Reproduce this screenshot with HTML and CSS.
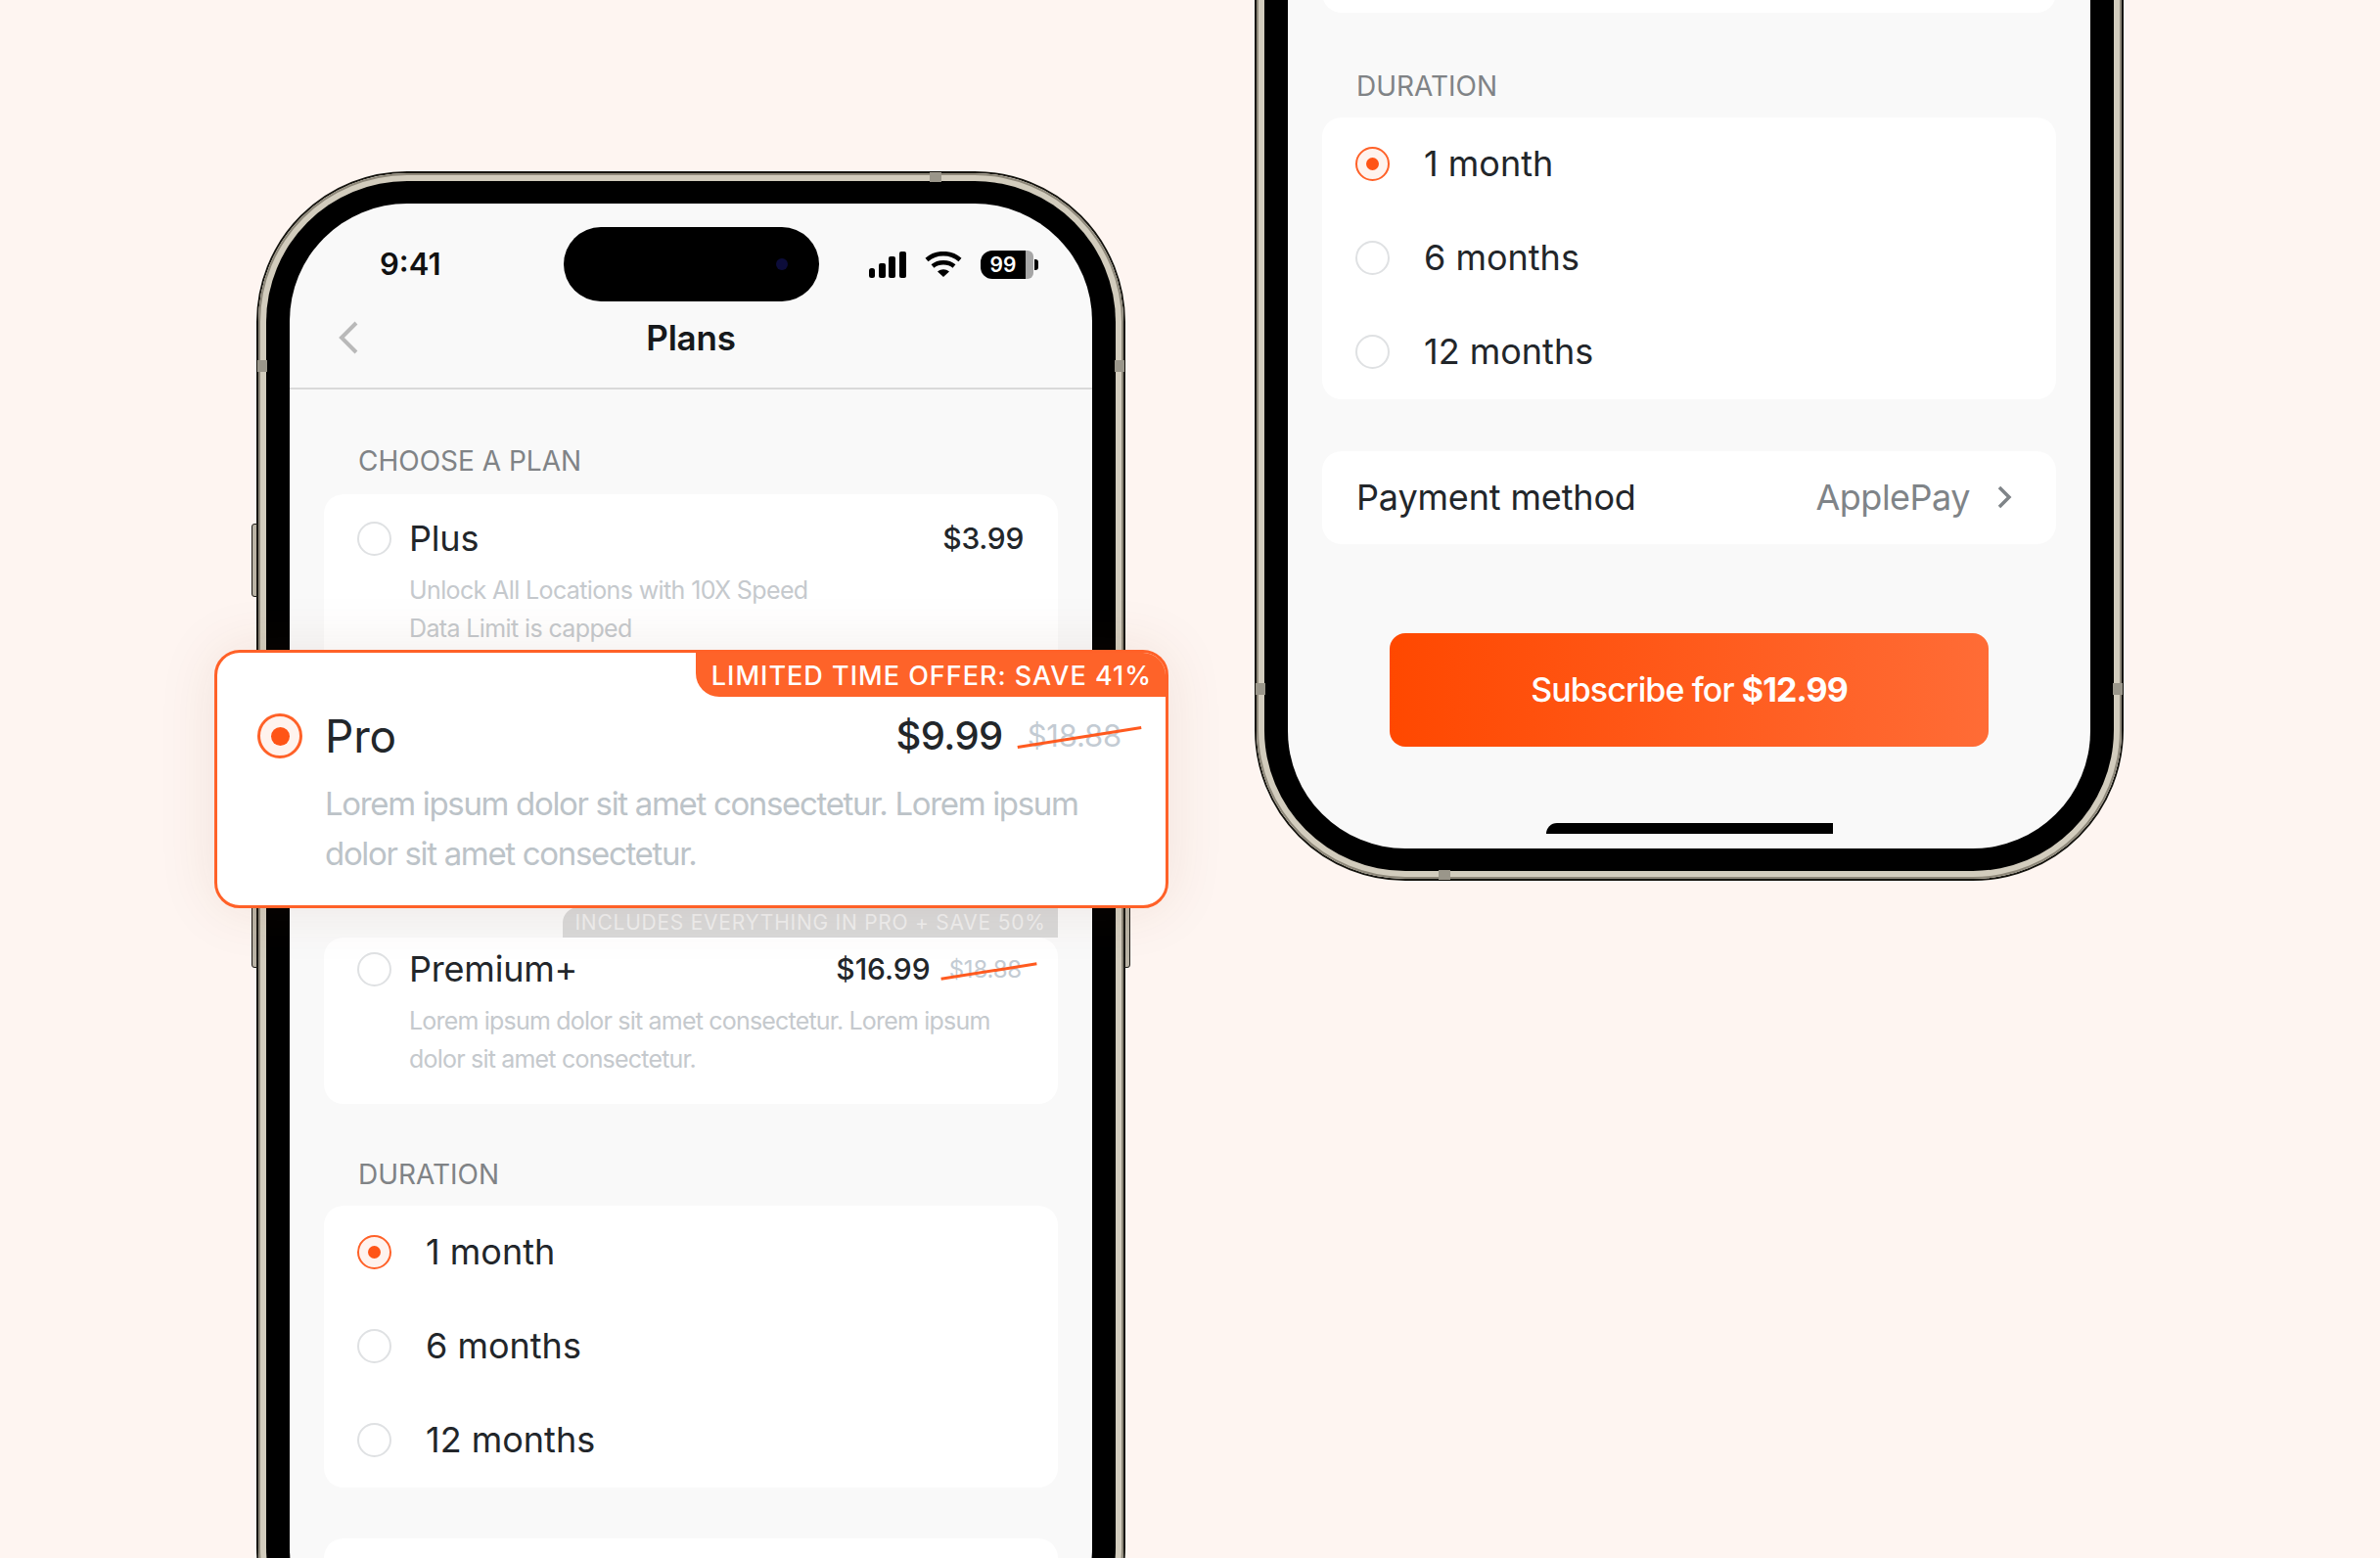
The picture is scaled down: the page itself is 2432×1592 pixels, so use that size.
FILE: index.html
```html
<!DOCTYPE html>
<html lang="en">
<head>
<meta charset="UTF-8">
<meta name="viewport" content="width=device-width, initial-scale=1.0">
<title>Plans</title>
<link rel="stylesheet" href="styles.css">
</head>
<body>

<div class="stage">

  <!-- Left phone: plan picker -->
  <div class="phone phone-left">
    <span class="side-btn side-btn-a"></span>
    <span class="side-btn side-btn-b"></span>
    <span class="side-btn side-btn-c"></span>
    <span class="band band-top"></span>
    <span class="band band-left"></span>
    <span class="band band-right"></span>
    <div class="ring">
      <div class="bezel">
        <div class="screen">
          <div class="status">
            <span class="time">9:41</span>
            <div class="island"><span class="camera"></span></div>
            <div class="status-icons">
              <svg class="signal" width="38" height="27" viewBox="0 0 38 27">
                <rect x="0" y="17" width="6" height="10" rx="2.500"/>
                <rect x="10" y="12" width="7" height="15" rx="2"/>
                <rect x="20" y="5" width="7" height="22" rx="2"/>
                <rect x="31" y="0" width="7" height="27" rx="2"/>
              </svg>
              <svg class="wifi" width="38" height="26" viewBox="0 0 38 26">
                <path d="M2 8.500C11.500 0 26.500 0 36 8.500" fill="none" stroke="#000" stroke-width="4.500"/>
                <path d="M8 15C14 10 24 10 30 15" fill="none" stroke="#000" stroke-width="4.500"/>
                <path d="M13 20.500C17 17.500 21 17.500 25 20.500L19 26Z"/>
              </svg>
              <span class="battery">99</span>
            </div>
          </div>

          <div class="nav">
            <svg class="back" width="22" height="34" viewBox="0 0 22 34">
              <path d="M19 2L4 17L19 32" fill="none" stroke="#b9b9b9" stroke-width="4"/>
            </svg>
            <h1 class="nav-title">Plans</h1>
          </div>

          <div class="content">
            <h2 class="section-label label-first">CHOOSE A PLAN</h2>

            <div class="card plan plan-plus">
              <div class="plan-row">
                <span class="radio"></span>
                <span class="plan-name">Plus</span>
                <span class="plan-price">$3.99</span>
              </div>
              <p class="plan-desc">Unlock All Locations with 10X Speed<br>Data Limit is capped</p>
            </div>

            <div class="premium">
              <div class="includes-tag">INCLUDES EVERYTHING IN PRO + SAVE 50%</div>
              <div class="card plan">
                <div class="plan-row">
                  <span class="radio"></span>
                  <span class="plan-name">Premium+</span>
                  <span class="plan-price">$16.99</span>
                  <span class="old-price">$18.88</span>
                </div>
                <p class="plan-desc">Lorem ipsum dolor sit amet consectetur. Lorem ipsum<br>dolor sit amet consectetur.</p>
              </div>
            </div>

            <h2 class="section-label">DURATION</h2>
            <div class="card">
              <div class="duration-row"><span class="radio on"></span><span>1 month</span></div>
              <div class="duration-row"><span class="radio"></span><span>6 months</span></div>
              <div class="duration-row"><span class="radio"></span><span>12 months</span></div>
            </div>

            <div class="card stub"></div>
          </div>
        </div>
      </div>
    </div>
  </div>

  <!-- Right phone: bottom of the same screen -->
  <div class="phone phone-right">
    <span class="band band-bottom"></span>
    <span class="band band-left"></span>
    <span class="band band-right"></span>
    <div class="ring">
      <div class="bezel">
        <div class="screen">
          <div class="content">
            <div class="card stub"></div>

            <h2 class="section-label">DURATION</h2>
            <div class="card">
              <div class="duration-row"><span class="radio on"></span><span>1 month</span></div>
              <div class="duration-row"><span class="radio"></span><span>6 months</span></div>
              <div class="duration-row"><span class="radio"></span><span>12 months</span></div>
            </div>

            <div class="card payment">
              <span class="payment-label">Payment method</span>
              <span class="payment-value">ApplePay</span>
              <svg class="chevron" width="18" height="24" viewBox="0 0 18 24">
                <path d="M4 2L14 12L4 22" fill="none" stroke="#7f8488" stroke-width="3.500"/>
              </svg>
            </div>

            <button class="subscribe">Subscribe for <strong>$12.99</strong></button>
            <div class="home-bar"></div>
          </div>
        </div>
      </div>
    </div>
  </div>

  <!-- Highlighted plan, sits over the left phone -->
  <div class="pro-card">
    <div class="offer-tag">LIMITED TIME OFFER: SAVE 41%</div>
    <div class="plan-row">
      <span class="radio on"></span>
      <span class="plan-name">Pro</span>
      <span class="plan-price">$9.99</span>
      <span class="old-price">$18.88</span>
    </div>
    <p class="plan-desc">Lorem ipsum dolor sit amet consectetur. Lorem ipsum<br>dolor sit amet consectetur.</p>
  </div>

</div>

</body>
</html>
```

FILE: styles.css
```css
* {
  box-sizing: border-box;
}

body {
  margin: 0;
  background-color: #fef5f1;
  font-family: Inter, "Liberation Sans", sans-serif;
  color: #22262a;
}

h1, h2, p {
  margin: 0;
  font-weight: normal;
}

.stage {
  position: relative;
  display: flex;
  align-items: flex-start;
  gap: 132px;
  width: 2432px;
  height: 1592px;
  padding-left: 262px;
  overflow: hidden;
}

/* Phone shell */
.phone {
  position: relative;
  flex: none;
  width: 888px;
  border: 2px solid #15140f;
  border-radius: 154px;
}

.phone-left {
  margin-top: 175px;
  height: 1560px;
}

.phone-right {
  margin-top: -220px;
  height: 1120px;
}

.ring {
  height: 100%;
  padding: 8px;
  border-radius: 152px;
  background-color: #d2ccbd;
  box-shadow: inset 0 0 0 2px #8e887a;
}

.bezel {
  height: 100%;
  padding: 23px 24px;
  border-radius: 144px;
  background-color: #000;
}

.screen {
  height: 100%;
  border-radius: 120px;
  background-color: #f9f9f9;
  overflow: hidden;
}

.side-btn {
  position: absolute;
  left: -7px;
  width: 6px;
  border: 1px solid #1d1c18;
  border-radius: 3px 0 0 3px;
  background-color: #b9b3a5;
}

.side-btn-a {
  top: 358px;
  height: 75px;
}

.side-btn-b {
  top: 700px;
  height: 112px;
}

.side-btn-c {
  left: auto;
  right: -7px;
  top: 640px;
  height: 172px;
  border-radius: 0 3px 3px 0;
}

.band {
  position: absolute;
  background-color: #9a968a;
  z-index: 1;
}

.band-top {
  top: -1px;
  left: 686px;
  width: 12px;
  height: 10px;
}

.band-bottom {
  bottom: -1px;
  left: 186px;
  width: 12px;
  height: 10px;
}

.band-left,
.band-right {
  width: 10px;
  height: 12px;
}

.band-left {
  left: -1px;
}

.band-right {
  right: -1px;
}

.phone-left .band-left,
.phone-left .band-right {
  top: 191px;
}

.phone-right .band-left,
.phone-right .band-right {
  top: 916px;
}

/* Status bar */
.status {
  display: grid;
  grid-template-columns: 280px 261px 1fr;
  align-items: center;
  height: 100px;
  padding-top: 24px;
}

.time {
  padding: 0 0 2px 92px;
  font-size: 31px;
  font-weight: 600;
  color: #111;
}

.island {
  display: flex;
  justify-content: flex-end;
  align-items: center;
  height: 76px;
  padding-right: 32px;
  border-radius: 38px;
  background-color: #000;
}

.camera {
  width: 12px;
  height: 12px;
  border-radius: 50%;
  background-color: #0c0c3a;
}

.status-icons {
  display: flex;
  align-items: center;
  margin-left: 51px;
}

.wifi {
  margin-left: 19px;
}

.battery {
  position: relative;
  width: 54px;
  height: 29px;
  margin-left: 19px;
  padding-right: 8px;
  border-radius: 12px 6px 6px 12px;
  background: linear-gradient(90deg, #000 85%, #a6a6a6 85%);
  color: #fff;
  font-size: 21px;
  font-weight: 600;
  line-height: 29px;
  text-align: center;
}

.battery::after {
  content: "";
  position: absolute;
  left: 55px;
  top: 9px;
  width: 4px;
  height: 11px;
  border-radius: 0 3px 3px 0;
  background-color: #000;
}

/* Nav */
.nav {
  display: grid;
  grid-template-columns: 1fr auto 1fr;
  align-items: center;
  height: 90px;
  padding: 0 49px 14px;
  border-bottom: 2px solid #d9d9d9;
}

.nav-title {
  font-size: 35px;
  font-weight: 600;
  letter-spacing: -0.2px;
  color: #16191c;
}

/* Cards and sections */
.content {
  display: flex;
  flex-direction: column;
  padding: 0 35px;
}

.section-label {
  margin: 55px 0 15px;
  padding-left: 35px;
  font-size: 28px;
  line-height: 34px;
  color: #808386;
}

.phone-right .section-label {
  margin-top: 58px;
}

.label-first {
  margin-top: 56px;
  margin-bottom: 17px;
}

.card {
  border-radius: 20px;
  background-color: #fff;
}

.stub {
  margin-top: 52px;
  height: 60px;
}

.phone-right .stub {
  margin-top: 0;
  height: 200px;
}

.plan {
  padding: 28px 37px 0 34px;
  height: 170px;
}

.plan-plus {
  height: 260px;
  padding-right: 35px;
}

.plan-row {
  display: flex;
  align-items: center;
  line-height: 35px;
}

.radio {
  flex: none;
  display: flex;
  justify-content: center;
  align-items: center;
  width: 35px;
  height: 35px;
  border: 2px solid #dfe1e3;
  border-radius: 50%;
  background-color: #fff;
}

.radio.on {
  border-color: #ff6128;
  background-color: #fff3ee;
}

.radio.on::after {
  content: "";
  width: 13px;
  height: 13px;
  border-radius: 50%;
  background-color: #ff5416;
}

.plan-name {
  flex: 1;
  margin-left: 18px;
  font-size: 36px;
  letter-spacing: -0.2px;
}

.plan-price {
  font-size: 30px;
  font-weight: 500;
  letter-spacing: -0.3px;
}

.premium .plan-price {
  letter-spacing: 0;
}

.old-price {
  position: relative;
  margin-left: 19px;
  font-size: 24px;
  letter-spacing: -0.2px;
  color: #c3cbd3;
}

.old-price::after {
  content: "";
  position: absolute;
  left: -9px;
  right: -16px;
  top: 50%;
  height: 3px;
  background-color: #ff5a1f;
  transform: rotate(-9deg);
}

.plan-desc {
  margin-top: 16px;
  padding-left: 53px;
  font-size: 25px;
  letter-spacing: -0.8px;
  line-height: 39px;
  color: #c5c9cd;
}

.plan-plus .plan-desc {
  letter-spacing: -0.62px;
}

/* Premium block */
.premium {
  display: flex;
  flex-direction: column;
  margin-top: 162px;
}

.includes-tag {
  align-self: flex-end;
  width: 506px;
  height: 31px;
  border-radius: 16px 0 0 0;
  background-color: #d9d9d9;
  color: #efefef;
  font-size: 21px;
  letter-spacing: 0.75px;
  line-height: 31px;
  text-align: center;
}

.premium .card {
  height: 170px;
  padding-top: 15px;
}

/* Duration rows */
.duration-row {
  display: flex;
  align-items: center;
  gap: 35px;
  height: 96px;
  padding: 0 0 2px 34px;
  font-size: 36px;
}

/* Payment row */
.payment {
  display: flex;
  align-items: center;
  height: 95px;
  margin-top: 53px;
  padding: 0 44px 2px 35px;
  font-size: 36px;
}

.payment-label {
  letter-spacing: -0.15px;
}

.payment-value {
  margin-left: auto;
  letter-spacing: -0.5px;
  color: #7f8488;
}

.chevron {
  margin-left: 26px;
}

.subscribe {
  align-self: center;
  width: 612px;
  height: 116px;
  margin-top: 91px;
  padding-bottom: 2px;
  border: none;
  border-radius: 16px;
  background: linear-gradient(90deg, #ff4800, #ff6c36);
  color: #fff;
  font-family: inherit;
  font-size: 34px;
  font-weight: 500;
  letter-spacing: -0.9px;
}

.subscribe strong {
  font-weight: 700;
}

.home-bar {
  align-self: center;
  width: 293px;
  height: 11px;
  margin-top: 78px;
  border-radius: 12px 0 0 0;
  background-color: #000;
}

/* Highlighted plan */
.pro-card {
  position: absolute;
  left: 219px;
  top: 664px;
  display: flex;
  flex-direction: column;
  width: 975px;
  height: 264px;
  border: 3px solid #ff6128;
  border-radius: 26px;
  background-color: #fff;
  box-shadow: 0 0 60px rgba(120, 60, 30, 0.1);
  overflow: hidden;
}

.offer-tag {
  align-self: flex-end;
  height: 45px;
  padding: 0 14px 0 16px;
  border-radius: 0 0 0 24px;
  background-color: #fe6329;
  color: #fff;
  font-size: 27px;
  font-weight: 500;
  letter-spacing: 1px;
  line-height: 47px;
}

.pro-card .plan-row {
  margin-top: 17px;
  padding: 0 45px 0 41px;
  line-height: 46px;
}

.pro-card .radio {
  width: 46px;
  height: 46px;
  border-width: 3px;
}

.pro-card .radio.on::after {
  width: 19px;
  height: 19px;
}

.pro-card .plan-name {
  margin-left: 23px;
  font-size: 46px;
}

.pro-card .plan-price {
  font-size: 40px;
  letter-spacing: -0.6px;
}

.pro-card .old-price {
  margin-left: 25px;
  font-size: 31px;
}

.pro-card .old-price::after {
  left: -11px;
  right: -21px;
}

.pro-card .plan-desc {
  margin-top: 21px;
  padding-left: 110px;
  font-size: 33px;
  letter-spacing: -1.33px;
  line-height: 51px;
  color: #bcc3c8;
}
```
